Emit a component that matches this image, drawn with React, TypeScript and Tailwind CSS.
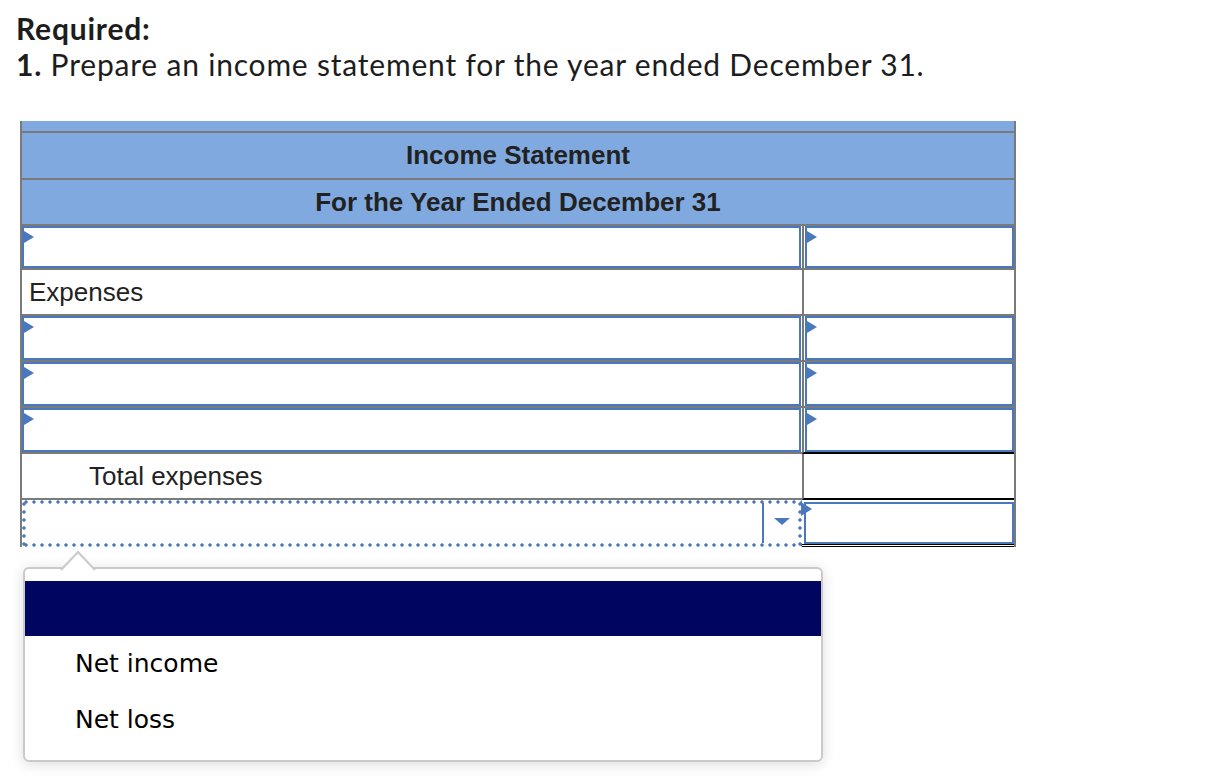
import React from 'react'

const rows = ['input', 'expenses', 'input', 'input', 'input', 'total'] as const

function Flag({ className = '' }: { className?: string }) {
  return (
    <span
      className={`absolute h-0 w-0 border-y-[6px] border-l-[10px] border-y-transparent border-l-[#4a78bd] ${className}`}
    />
  )
}

function InputBox() {
  return (
    <div className="relative h-full border-2 border-[#4a78bd] bg-white">
      <Flag className="left-0 top-[3px]" />
    </div>
  )
}

export default function App() {
  return (
    <div className="relative h-[784px] w-full overflow-hidden bg-white font-['Liberation_Sans',Arial,sans-serif] text-[#222]">
      {/* Question text */}
      <div className="pl-[16px] pt-[10px] font-['Lato',sans-serif] text-[30px] leading-[36px] tracking-[0.8px] text-[#1d1d1d]">
        <div className="font-bold">Required:</div>
        <div>
          <span className="font-bold">1.</span> Prepare an income statement for the year ended December 31.
        </div>
      </div>

      {/* Statement table */}
      <div className="ml-[20px] mt-[39px] w-[996px] border-x-2 border-[#7a7a7a]">
        <div className="h-[12px] border-b-2 border-[#7a7a7a] bg-[#80aadf]" />
        <div className="flex h-[47px] items-center justify-center border-b-2 border-[#7a7a7a] bg-[#80aadf] text-[26px] font-bold">
          Income Statement
        </div>
        <div className="flex h-[46px] items-center justify-center border-b-2 border-[#7a7a7a] bg-[#80aadf] text-[26px] font-bold">
          For the Year Ended December 31
        </div>

        {rows.map((r, i) => (
          <div key={i} className={`flex ${i === 0 ? 'h-[44px]' : 'h-[46px]'}`}>
            <div className="flex-1 border-b-2 border-[#7a7a7a] pr-[1px]">
              {r === 'input' && <InputBox />}
              {r === 'expenses' && <div className="flex h-full items-center pl-[7px] text-[26px]">Expenses</div>}
              {r === 'total' && <div className="flex h-full items-center pl-[67px] text-[26px]">Total expenses</div>}
            </div>
            <div
              className={`w-[212px] border-b-2 border-l-2 border-l-[#7a7a7a] pl-[1px] ${
                i >= 4 ? 'border-b-black' : 'border-b-[#7a7a7a]'
              }`}
            >
              {r === 'input' && <InputBox />}
            </div>
          </div>
        ))}

        {/* Net income / loss row */}
        <div className="flex h-[47px]">
          <div className="relative flex-1 [background:radial-gradient(circle,#4a78bd_1.4px,transparent_1.9px)_left_top/8px_4px_repeat-x,radial-gradient(circle,#4a78bd_1.4px,transparent_1.9px)_left_bottom/8px_4px_repeat-x,radial-gradient(circle,#4a78bd_1.4px,transparent_1.9px)_left_top/4px_8px_repeat-y,radial-gradient(circle,#4a78bd_1.4px,transparent_1.9px)_right_top/4px_8px_repeat-y]">
            <div className="absolute right-[38px] top-[3px] h-[40px] w-[2px] bg-[#4a78bd]" />
            <div className="absolute right-[12px] top-[18px] h-0 w-0 border-x-[8px] border-t-[7px] border-x-transparent border-t-[#4a78bd]" />
          </div>
          <div className="relative w-[212px] border-b-[3px] border-double border-b-black pl-[2px] pt-[2px]">
            <div className="h-[42px] border-2 border-[#4a78bd] bg-white" />
            <Flag className="-left-[1px] top-[2px] border-y-[7px] border-l-[11px]" />
          </div>
        </div>
      </div>

      {/* Dropdown menu */}
      <div className="absolute left-[23px] top-[567px] h-[195px] w-[800px] rounded-[6px] border-2 border-[#cacaca] bg-white pt-[12px] shadow-[0_2px_14px_rgba(0,0,0,0.14)]">
        <svg className="absolute -top-[20px] left-[35px]" width="36" height="22" viewBox="0 0 36 22">
          <path d="M1 21 L18 3 L35 21" fill="white" stroke="#cacaca" strokeWidth="2" />
        </svg>
        <div className="h-[55px] w-full bg-[#000660]" />
        <div className="flex h-[56px] items-center pl-[50px] font-['DejaVu_Sans',sans-serif] text-[25px] text-black">
          Net income
        </div>
        <div className="flex h-[56px] items-center pl-[50px] font-['DejaVu_Sans',sans-serif] text-[25px] text-black">
          Net loss
        </div>
      </div>
    </div>
  )
}
